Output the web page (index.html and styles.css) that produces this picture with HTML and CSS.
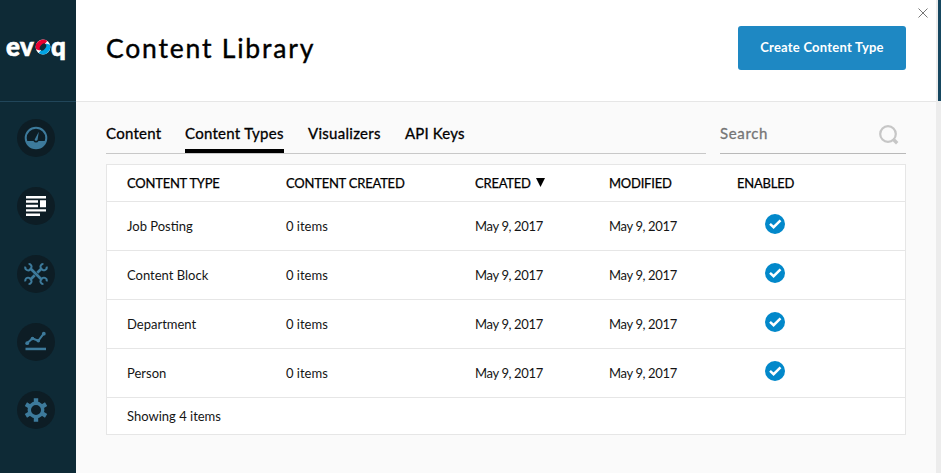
FILE: index.html
```html
<!DOCTYPE html>
<html lang="en">
<head>
<meta charset="utf-8">
<title>Content Library</title>
<link rel="stylesheet" href="styles.css">
</head>
<body>
<div class="app">
  <aside class="sidebar">
    <div class="brand">
      <span class="brand-ev">ev</span>
      <svg class="brand-o" width="16" height="16" viewBox="0 0 16 16">
        <circle cx="8" cy="8" r="7.4" fill="#fff"/>
        <path d="M1 10.2A7.4 7.4 0 0 1 12.3 2L4.5 11.5Z" fill="#e9002f"/>
        <path d="M15 5.8A7.4 7.4 0 0 1 3.7 14L11.5 4.5Z" fill="#00a3e4"/>
        <ellipse cx="8" cy="8" rx="2.6" ry="4" transform="rotate(40 8 8)" fill="#0e2a36"/>
      </svg>
      <span class="brand-q">q</span>
    </div>
    <nav class="nav">
      <a class="nav-item"><svg width="24" height="24" viewBox="0 0 24 24"><circle cx="12" cy="12" r="10.3" fill="none" stroke="#3d7a9b" stroke-width="2"/><path d="M2 15H9.5A2.8 2.8 0 0 0 14.5 15H22A10.6 10.6 0 0 1 2 15Z" fill="#3d7a9b"/><path d="M14.8 5.8L13.5 14A1.5 1.5 0 0 1 10.7 13.4Z" fill="#3d7a9b"/></svg></a>
      <a class="nav-item"><svg width="24" height="24" viewBox="0 0 24 24" fill="#fff"><path d="M2 2H22V4.5H2ZM2 6.3H14V8.7H2ZM2 10.8H14V13.2H2ZM16 6.3H22V13.2H16ZM2 15.2H22V17.6H2ZM2 19.5H16V21.9H2Z"/></svg></a>
      <a class="nav-item"><svg width="24" height="24" viewBox="0 0 24 24" fill="none" stroke="#3d7a9b"><path d="M6.5 6.5L17.5 17.5M17.5 6.5L13.3 10.7M10.7 13.3L6.5 17.5" stroke-width="2.7"/><path d="M4.6 1.9A2.7 2.7 0 0 1 6.6 6.6A2.7 2.7 0 0 1 1.5 4.6M19.4 1.9A2.7 2.7 0 0 0 17.4 6.6A2.7 2.7 0 0 0 22.5 4.6M4.6 22.1A2.7 2.7 0 0 0 6.6 17.4A2.7 2.7 0 0 0 1.5 19.4M19.4 22.1A2.7 2.7 0 0 1 17.4 17.4A2.7 2.7 0 0 1 22.5 19.4" stroke-width="2"/></svg></a>
      <a class="nav-item"><svg width="24" height="24" viewBox="0 0 24 24"><path d="M3 13.2L8.5 8.5L14.3 10.8L19.7 3.6" fill="none" stroke="#3d7a9b" stroke-width="2"/><g fill="#3d7a9b"><circle cx="3.2" cy="13.2" r="1.9"/><circle cx="8.5" cy="8.5" r="1.8"/><circle cx="14.3" cy="10.8" r="1.8"/><circle cx="19.8" cy="3.7" r="1.9"/><path d="M1.5 17.7H22V20.2H1.5Z"/></g></svg></a>
      <a class="nav-item"><svg width="24" height="24" viewBox="0 0 24 24" fill="none" stroke="#3d7a9b"><circle cx="12" cy="12" r="6.7" stroke-width="3.4"/><path d="M12 .3V5M12 19V23.7M1.9 6.2L5.5 8.3M18.5 15.7L22.1 17.8M1.9 17.8L5.5 15.7M18.5 8.3L22.1 6.2" stroke-width="4.4"/></svg></a>
    </nav>
  </aside>
  <main class="panel">
    <header class="header">
      <h1 class="title">Content Library</h1>
      <button class="create">Create Content Type</button>
      <svg class="close" width="10" height="10" viewBox="0 0 10 10"><path d="M.5 .5L9.5 9.5M9.5 .5L.5 9.5" stroke="#777" stroke-width="1"/></svg>
    </header>
    <section class="body">
      <div class="toolbar">
        <div class="tabs">
          <a class="tab tab-content">Content</a>
          <a class="tab tab-types active">Content Types</a>
          <a class="tab tab-visualizers">Visualizers</a>
          <a class="tab tab-keys">API Keys</a>
        </div>
        <div class="search"><span>Search</span><svg width="20" height="20" viewBox="0 0 20 20" fill="none" stroke="#c6c6c6"><circle cx="9" cy="9" r="7.8" stroke-width="2.2"/><path d="M14 14L18.2 18.2" stroke-width="3.4"/></svg></div>
      </div>
      <div class="table">
        <div class="row head"><span>CONTENT TYPE</span><span>CONTENT CREATED</span><span class="sorted">CREATED <svg width="9" height="9" viewBox="0 0 9 9"><path d="M0 0H9L4.5 9Z"/></svg></span><span>MODIFIED</span><span>ENABLED</span></div>
        <div class="row"><span>Job Posting</span><span>0 items</span><span class="date">May 9, 2017</span><span class="date">May 9, 2017</span><span class="check"><svg width="20" height="20" viewBox="0 0 20 20"><circle cx="10" cy="10" r="10" fill="#0288ca"/><path d="M5 9.8L8.6 13.2L15.5 6.3" fill="none" stroke="#fff" stroke-width="2.5"/></svg></span></div>
        <div class="row"><span>Content Block</span><span>0 items</span><span class="date">May 9, 2017</span><span class="date">May 9, 2017</span><span class="check"><svg width="20" height="20" viewBox="0 0 20 20"><circle cx="10" cy="10" r="10" fill="#0288ca"/><path d="M5 9.8L8.6 13.2L15.5 6.3" fill="none" stroke="#fff" stroke-width="2.5"/></svg></span></div>
        <div class="row"><span>Department</span><span>0 items</span><span class="date">May 9, 2017</span><span class="date">May 9, 2017</span><span class="check"><svg width="20" height="20" viewBox="0 0 20 20"><circle cx="10" cy="10" r="10" fill="#0288ca"/><path d="M5 9.8L8.6 13.2L15.5 6.3" fill="none" stroke="#fff" stroke-width="2.5"/></svg></span></div>
        <div class="row"><span>Person</span><span>0 items</span><span class="date">May 9, 2017</span><span class="date">May 9, 2017</span><span class="check"><svg width="20" height="20" viewBox="0 0 20 20"><circle cx="10" cy="10" r="10" fill="#0288ca"/><path d="M5 9.8L8.6 13.2L15.5 6.3" fill="none" stroke="#fff" stroke-width="2.5"/></svg></span></div>
        <div class="row foot"><span>Showing 4 items</span></div>
      </div>
    </section>
  </main>
  <div class="edge"><div class="edge-top"></div></div>
</div>
</body>
</html>
```
FILE: styles.css
```css
* { box-sizing: border-box; }
body { margin: 0; font-family: Lato, "Liberation Sans", sans-serif; color: #000; }
.app { display: flex; width: 941px; height: 473px; overflow: hidden; background: #fafafa; }
.sidebar { width: 76px; background: #0e2a36; }
.brand { height: 102px; border-bottom: 1px solid #21465a; display: flex; align-items: flex-start; padding: 32px 0 0 6px; color: #fff; font-family: Lato, sans-serif; font-weight: 900; font-size: 26px; line-height: 28px; -webkit-text-stroke: .7px #fff; }
.brand-ev { width: 29px; letter-spacing: .4px; }
.brand-o { margin-top: 7px; flex: none; }
.nav { display: flex; flex-direction: column; align-items: center; gap: 30px; padding: 17px 4px 0 0; }
.nav-item { width: 38px; height: 38px; border-radius: 50%; background: #0d1d25; display: flex; align-items: center; justify-content: center; }
.panel { width: 860px; }
.header { position: relative; height: 102px; background: #fff; border-bottom: 1px solid #e6e6e6; display: flex; justify-content: space-between; align-items: flex-start; padding: 26px 30px 0; }
.title { margin: 4px 0 0; font-size: 26.5px; font-weight: 400; line-height: 36px; letter-spacing: 1.8px; -webkit-text-stroke: .4px #000; }
.create { width: 168px; height: 44px; border: 0; border-radius: 3px; background: #1e88c3; color: #fff; font: 700 13px/42px Lato, sans-serif; padding: 0 0 2px; letter-spacing: .23px; }
.close { position: absolute; left: 842px; top: 8px; }
.body { padding: 0 30px; }
.toolbar { display: flex; gap: 14px; height: 52px; }
.tabs { width: 600px; border-bottom: 1px solid #c8c8c8; display: flex; gap: 24px; padding-top: 20px; }
.tab { height: 32px; font-size: 15px; line-height: 22px; letter-spacing: .28px; white-space: nowrap; -webkit-text-stroke: .3px #000; }
.tab-content { width: 55px; }
.tab-types { width: 99px; }
.tab-visualizers { width: 73px; }
.tab-keys { width: 60px; letter-spacing: .15px; }
.active { height: 31px; border-bottom: 4px solid #000; }
.search { width: 186px; border-bottom: 1px solid #b9b9b9; display: flex; justify-content: space-between; padding: 20px 7px 0 0; font-size: 15px; line-height: 22px; letter-spacing: .65px; color: #757575; -webkit-text-stroke: .3px #757575; }
.search svg { margin-top: 3px; }
.table { width: 800px; margin-top: 10px; border: 1px solid #e6e6e6; background: #fff; font-size: 13px; }
.row { display: grid; grid-template-columns: 159px 189px 134px 128px 1fr; height: 49px; padding: 0 0 1px 20px; align-items: center; border-bottom: 1px solid #e6e6e6; white-space: nowrap; letter-spacing: 0; color: #151515; }
.head { height: 37px; letter-spacing: -.22px; color: #000; -webkit-text-stroke: .25px #000; }
.foot { height: 36px; border-bottom: 0; }
.date { letter-spacing: -.37px; }
.sorted svg { margin-left: 2px; margin-bottom: 1px; }
.check { padding-left: 28px; height: 20px; margin-top: -3px; }
.check svg { display: block; }
.edge { width: 5px; background: #ececec; padding-left: 2px; }
.edge-top { height: 101px; background: #164760; }
```
